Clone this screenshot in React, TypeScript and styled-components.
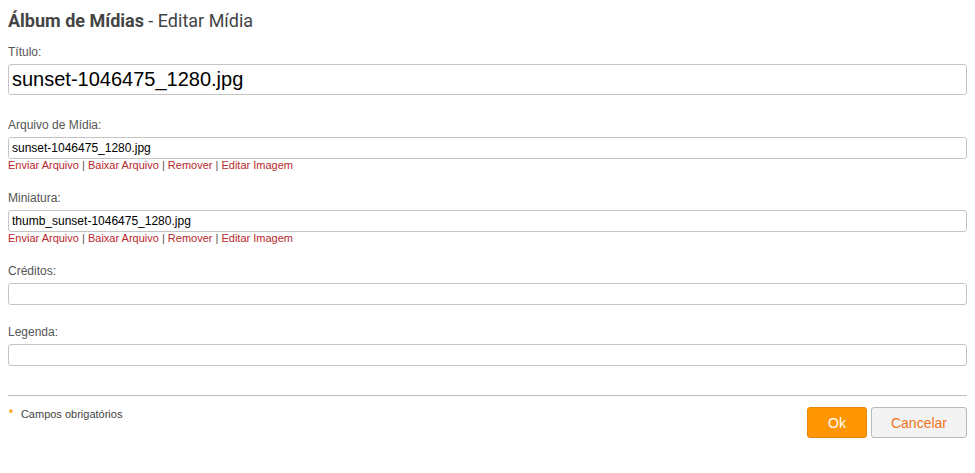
import * as React from 'react';
import styled, { createGlobalStyle } from 'styled-components';

const GlobalStyle = createGlobalStyle`
    html, body {
        margin: 0;
        padding: 0;
        background: #fff;
    }
    body {
        font-family: "Liberation Sans", Arial, sans-serif;
        color: #444;
    }
`;

const Page = styled.div`
    padding: 0 8px;
`;

const Heading = styled.h1`
    margin: 0 0 13px;
    padding-top: 10px;
    font-family: Roboto, "Liberation Sans", Arial, sans-serif;
    font-size: 18px;
    line-height: 22px;
    font-weight: normal;
    color: #444;

    strong {
        font-weight: bold;
    }
`;

const Field = styled.div<{ $gap?: number }>`
    margin-bottom: ${({ $gap }) => `${$gap ?? 19}px`};
`;

const Label = styled.label`
    display: block;
    font-size: 12px;
    line-height: 14px;
    color: #555;
    margin-bottom: 5px;
`;

const Input = styled.input<{ $big?: boolean }>`
    display: block;
    box-sizing: border-box;
    width: 100%;
    height: ${({ $big }) => ($big ? '31px' : '22px')};
    margin: 0;
    padding: 0 3px;
    border: 1px solid #c4c4c4;
    border-radius: 3px;
    font-family: "Liberation Sans", Arial, sans-serif;
    font-size: ${({ $big }) => ($big ? '20px' : '12px')};
    color: #000;
    background: #fff;
    outline: none;
`;

const Links = styled.div`
    font-size: 11px;
    line-height: 13px;
    color: #555;
`;

const Link = styled.a`
    color: #b8282d;
    text-decoration: none;
    cursor: pointer;
`;

const Divider = styled.hr`
    margin: 29px 0 0;
    border: 0;
    border-top: 1px solid #bdbdbd;
    height: 0;
`;

const Footer = styled.div`
    display: flex;
    justify-content: space-between;
    align-items: flex-start;
    padding-top: 10px;
`;

const Required = styled.div`
    display: flex;
    align-items: center;
    gap: 8px;
    font-size: 11px;
    line-height: 13px;
    color: #444;
    padding-top: 2px;
`;

const Star = styled.span`
    color: #f5a000;
    font-size: 10px;
    font-weight: bold;
    line-height: 10px;
    margin-top: -2px;
    margin-left: 1px;
`;

const Buttons = styled.div`
    display: flex;
    gap: 4px;
    padding-top: 1px;
`;

const Button = styled.button<{ $primary?: boolean }>`
    box-sizing: border-box;
    height: 31px;
    padding: 0 ${({ $primary }) => ($primary ? '20px' : '19px')};
    border-radius: 3px;
    font-family: "Liberation Sans", Arial, sans-serif;
    font-size: 14px;
    cursor: pointer;
    border: 1px solid ${({ $primary }) => ($primary ? '#e8870a' : '#b9b9b9')};
    background: ${({ $primary }) => ($primary ? '#ff9500' : '#f3f3f3')};
    color: ${({ $primary }) => ($primary ? '#fff' : '#f27321')};
`;

const FileLinks: React.FC = () => (
    <Links>
        <Link>Enviar Arquivo</Link> | <Link>Baixar Arquivo</Link> | <Link>Remover</Link> |{' '}
        <Link>Editar Imagem</Link>
    </Links>
);

export default function App() {
    return (
        <Page>
            <GlobalStyle />
            <Heading>
                <strong>Álbum de Mídias</strong> - Editar Mídia
            </Heading>

            <Field $gap={23}>
                <Label>Título:</Label>
                <Input $big defaultValue="sunset-1046475_1280.jpg" />
            </Field>

            <Field>
                <Label>Arquivo de Mídia:</Label>
                <Input defaultValue="sunset-1046475_1280.jpg" />
                <FileLinks />
            </Field>

            <Field>
                <Label>Miniatura:</Label>
                <Input defaultValue="thumb_sunset-1046475_1280.jpg" />
                <FileLinks />
            </Field>

            <Field $gap={20}>
                <Label>Créditos:</Label>
                <Input />
            </Field>

            <Field $gap={0}>
                <Label>Legenda:</Label>
                <Input />
            </Field>

            <Divider />
            <Footer>
                <Required>
                    <Star>*</Star>
                    Campos obrigatórios
                </Required>
                <Buttons>
                    <Button $primary>Ok</Button>
                    <Button>Cancelar</Button>
                </Buttons>
            </Footer>
        </Page>
    );
}
